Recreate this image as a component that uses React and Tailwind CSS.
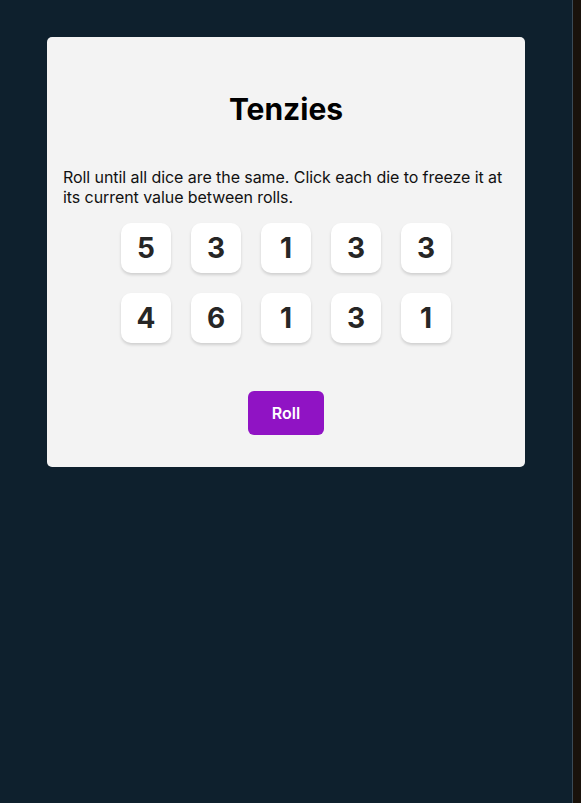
import React from "react";

const dice = [5, 3, 1, 3, 3, 4, 6, 1, 3, 1];

export default function App() {
  return (
    <div className="flex min-h-[803px] w-full" style={{ fontFamily: "Inter, 'Noto Sans', sans-serif" }}>
      <main className="flex-1 bg-[#0E202D] px-[47px] pt-[37px]">
        <div className="flex h-[430px] flex-col items-center rounded-[5px] bg-[#F3F3F3] px-4">
          <h1 className="mt-[54px] text-[30px] font-bold leading-[36px] text-black">Tenzies</h1>
          <p className="mt-[40px] w-full text-[16px] leading-[20px] tracking-[-0.07px] text-[#111]">
            Roll until all dice are the same. Click each die to freeze it at its current value between rolls.
          </p>
          <div className="mt-[16px] grid grid-cols-5 gap-5">
            {dice.map((d, i) => (
              <button
                key={i}
                className="flex h-[50px] w-[50px] items-center justify-center rounded-[10px] bg-white text-[28px] font-bold text-[#262626] shadow-[0_2px_3px_rgba(0,0,0,0.15)]"
              >
                {d}
              </button>
            ))}
          </div>
          <button className="mt-[48px] h-[44px] w-[76px] rounded-[6px] bg-[#9013C4] text-[16px] font-semibold text-white">
            Roll
          </button>
        </div>
      </main>
      <div className="w-px bg-[#3A4A56]" />
      <div className="w-[8px] bg-[#19120B]" />
    </div>
  );
}
